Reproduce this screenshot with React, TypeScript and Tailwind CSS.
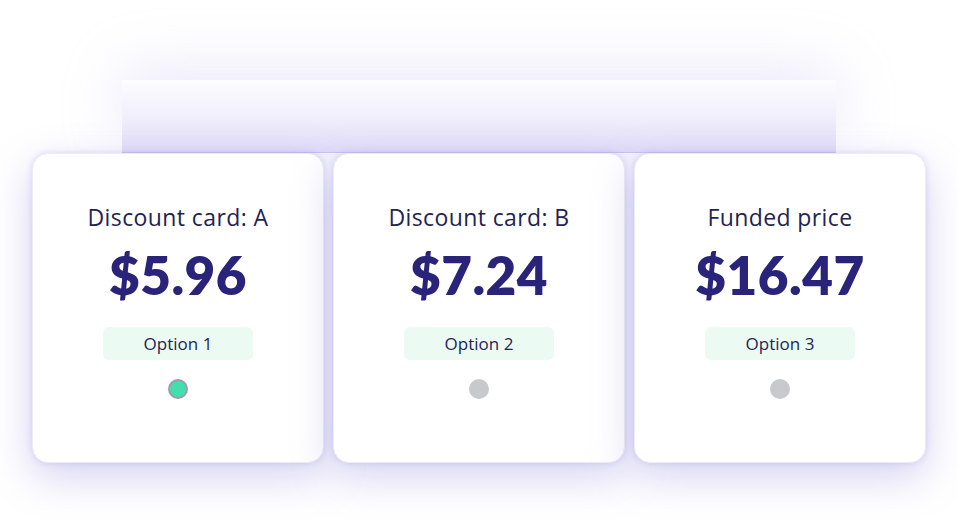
import React from "react";

const cards = [
  { title: "Discount card: A", price: "$5.96", option: "Option 1", active: true },
  { title: "Discount card: B", price: "$7.24", option: "Option 2", active: false },
  { title: "Funded price", price: "$16.47", option: "Option 3", active: false },
];

export default function App() {
  return (
    <div
      className="w-[958px] h-[528px] bg-white overflow-hidden flex flex-col"
      style={{ fontFamily: "Lato, 'Open Sans', sans-serif" }}
    >
      <div className="pt-[80px] flex flex-col">
        <div className="ml-[122px] w-[714px] h-[73px] bg-gradient-to-b from-[#fdfcff] via-[#f1effc] to-[#e2ddf8] border-b border-[#cdc6f0] shadow-[0_-10px_60px_rgba(190,180,240,0.3)]" />
        <div className="flex gap-[9px] pl-[32px]">
          {cards.map((c) => (
            <div
              key={c.title}
              className="w-[292px] h-[310px] bg-white rounded-[16px] border border-[#ecebf6] shadow-[0_0_6px_rgba(120,105,215,0.22),0_14px_40px_rgba(140,130,220,0.36)] flex flex-col items-center"
            >
              <div
                className="mt-[48px] text-[23px] leading-[31px] text-[#1f2452] tracking-[0.4px]"
                style={{ fontFamily: "'Open Sans', Lato, sans-serif" }}
              >
                {c.title}
              </div>
              <div className="mt-[12px] text-[53px] leading-[60px] font-extrabold text-[#29237a] tracking-[0.5px]">
                {c.price}
              </div>
              <div
                className="mt-[22px] w-[150px] h-[33px] rounded-[6px] bg-[#ebfbf3] flex items-center justify-center text-[17px] text-[#1f2452]"
                style={{ fontFamily: "'Open Sans', Lato, sans-serif" }}
              >
                {c.option}
              </div>
              <div
                className={
                  c.active
                    ? "mt-[19px] w-[20px] h-[20px] rounded-full bg-[#40dfac] border-2 border-[#a19aaf]"
                    : "mt-[19px] w-[20px] h-[20px] rounded-full bg-[#c8c9cd]"
                }
              />
            </div>
          ))}
        </div>
      </div>
    </div>
  );
}
